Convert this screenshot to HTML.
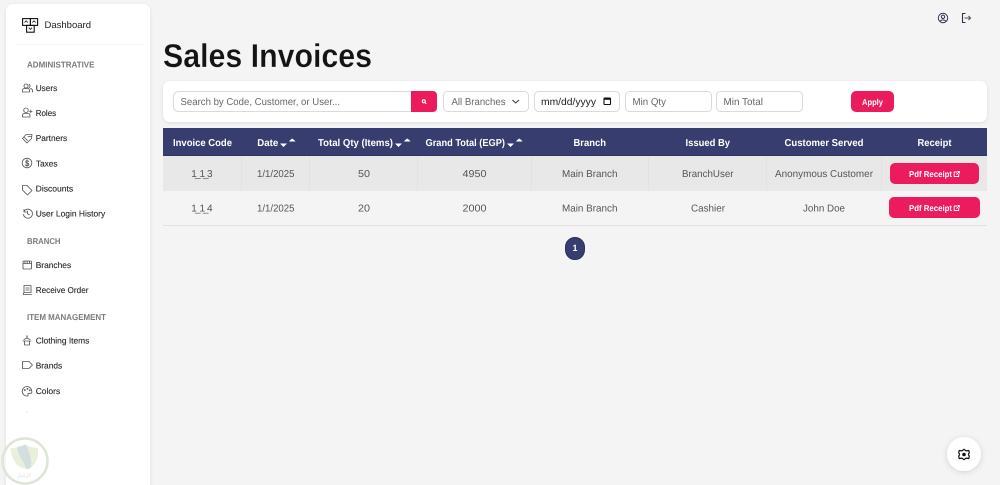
<!DOCTYPE html>
<html lang="en"><head><meta charset="utf-8"><title>Sales Invoices</title>
<style>
html,body{margin:0;padding:0;width:1000px;height:485px;overflow:hidden;background:#f4f4f4}
svg{display:block;position:absolute;left:0;top:0}
text{font-family:"Liberation Sans",sans-serif;text-rendering:geometricPrecision}
.nav{font-size:8.5px;fill:#2a2a2a;stroke:#2a2a2a;stroke-width:.12}
.sec{font-size:8.5px;fill:#7a7a7a;font-weight:bold}
.th{font-size:10px;fill:#fff;font-weight:bold}
.td{font-size:10px;fill:#555}
.ph{font-size:10px;fill:#666}
.ic{fill:none;stroke:#555;stroke-width:.85;stroke-linecap:round;stroke-linejoin:round}
</style></head><body>
<svg width="1000" height="485" viewBox="0 0 1000 485">
<defs>
<filter id="s" x="-10%" y="-10%" width="120%" height="120%"><feDropShadow dx="0" dy="1" stdDeviation="1.5" flood-color="#000" flood-opacity=".1"/></filter>
<filter id="g" x="-40%" y="-40%" width="180%" height="180%"><feDropShadow dx="0" dy="1" stdDeviation="3" flood-color="#000" flood-opacity=".14"/></filter>
</defs>

<!-- sidebar -->
<rect x="6" y="4" width="144" height="490" rx="7" fill="#fff" filter="url(#s)"/>
<rect x="14" y="44" width="130" height="1" fill="#f6f6f6"/>
<g fill="none" stroke="#111" stroke-width="1.1">
<rect x="22.6" y="18.6" width="7.8" height="6.8"/><rect x="30.4" y="18.6" width="7.2" height="6.8"/><rect x="26.6" y="25.4" width="7.6" height="6.8"/>
<path d="M24.5 22.5l1.7-1.7 1.7 1.7M32.3 22.5l1.7-1.7 1.7 1.7M28.7 27.7l1.7 1.7 1.7-1.7" stroke-width=".8"/>
</g>
<text x="44.5" y="28" font-size="9.5" fill="#222" textLength="46.5" lengthAdjust="spacingAndGlyphs">Dashboard</text>

<text class="sec" x="27" y="67.5" textLength="67.5" lengthAdjust="spacingAndGlyphs">ADMINISTRATIVE</text>
<text class="nav" x="35.7" y="91" textLength="21.5" lengthAdjust="spacingAndGlyphs">Users</text>
<text class="nav" x="35.7" y="116" textLength="20.5" lengthAdjust="spacingAndGlyphs">Roles</text>
<text class="nav" x="35.7" y="141" textLength="31.5" lengthAdjust="spacingAndGlyphs">Partners</text>
<text class="nav" x="36" y="166.5" textLength="21.5" lengthAdjust="spacingAndGlyphs">Taxes</text>
<text class="nav" x="35.7" y="191.5" textLength="37.5" lengthAdjust="spacingAndGlyphs">Discounts</text>
<text class="nav" x="35.7" y="216.5" textLength="69.5" lengthAdjust="spacingAndGlyphs">User Login History</text>
<text class="sec" x="27" y="244" textLength="33.5" lengthAdjust="spacingAndGlyphs">BRANCH</text>
<text class="nav" x="35.7" y="268" textLength="35.5" lengthAdjust="spacingAndGlyphs">Branches</text>
<text class="nav" x="35.7" y="293" textLength="52.8" lengthAdjust="spacingAndGlyphs">Receive Order</text>
<text class="sec" x="27" y="320" textLength="79" lengthAdjust="spacingAndGlyphs">ITEM MANAGEMENT</text>
<text class="nav" x="35.7" y="343.5" textLength="53.7" lengthAdjust="spacingAndGlyphs">Clothing Items</text>
<text class="nav" x="35.7" y="368.5" textLength="26.5" lengthAdjust="spacingAndGlyphs">Brands</text>
<text class="nav" x="35.7" y="394" textLength="24.5" lengthAdjust="spacingAndGlyphs">Colors</text>
<circle cx="27" cy="412" r=".6" fill="#ccc"/>

<!-- sidebar icons -->
<g class="ic">
<path d="M22.5 92v-1.5q0-2 2-2h3q2 0 2 2V92zM26 88a2 2 0 1 0 0-4 2 2 0 0 0 0 4M29 84.3a2 2 0 0 1 0 3.5M30.5 88.6q2 .3 2 2.2V92"/>
<path d="M22.5 117v-1.5q0-2 2-2h3.5q2 0 2 2v1.5zM26 112.5a2.2 2.2 0 1 0 0-4.500 2.200 2.200 0 0 0 0 4.500M29.5 111.5h2.6M30.8 110v2.8"/>
<path d="M22.5 138.500l3.500-4h6l-.5 4-4.500 4.500zM24.500 137.500l3 3M28 136.500h3"/>
<circle cx="27" cy="163" r="4.800"/><path d="M28.800 161.500q-1-1-2-.8-1.300.3-1 1.500.3.900 1.500 1 1.500.3 1.500 1.300 0 1.200-1.500 1.200-1.200 0-2-.8M27 159.500v7"/>
<path d="M22.500 185.500h4.500l5 5-4.500 4.500-5-5z"/>
<path d="M24 211.500a4.500 4.500 0 1 1-.5 3M24 209.500v2.500h2.500M27.500 211v2.800l1.800 1"/>
<rect x="23" y="261" width="8.500" height="8" rx="1"/><path d="M23 263.500h8.500M25 261v2.500M27.200 261v2.500M29.500 261v2.500"/>
<path d="M24 285.500h7v7h-7zM23.500 294.500h8M24 292.500q-1 1-.5 2M25.800 288h3.500M25.800 290h3.500"/>
<path d="M27 336v2M24 339.500l3-1.500 3 1.500M23 341h8M24.500 341v4h5v-4M26.500 336h1"/>
<path d="M22.500 361.500h6.500l3.500 3.500-3.500 3.500h-6.500z"/>
<path d="M27 386.500a4.800 4.800 0 1 0 0 9.600q1.400 0 1-1.300-.6-1.500 1-1.500h2q1 0 .8-2a4.800 4.800 0 0 0-4.800-4.800z"/>
<circle cx="24.800" cy="390" r=".5"/><circle cx="27.500" cy="388.800" r=".5"/><circle cx="29.800" cy="390.300" r=".5"/>
</g>

<!-- top right icons -->
<g fill="none" stroke="#2c3550" stroke-width="1">
<circle cx="943" cy="18" r="4.700"/><circle cx="943" cy="16.800" r="1.700"/><path d="M939.800 21.200q3.200-2.700 6.400 0"/>
<path d="M965.500 13.500h-3v9h3" stroke-width="1.100"/>
<path d="M964.500 18h6M968.500 16l2 2-2 2" stroke="#555" stroke-width="1.100"/>
</g>

<!-- title -->
<text x="163" y="67" font-size="33" font-weight="bold" fill="#141414" stroke="#f4f4f4" stroke-width=".25" textLength="209" lengthAdjust="spacingAndGlyphs">Sales Invoices</text>

<!-- filter card -->
<rect x="163" y="81" width="824" height="41" rx="7" fill="#fff" filter="url(#s)"/>
<rect x="173.500" y="91.500" width="250" height="20" rx="5" fill="#fff" stroke="#d8dadd"/>
<path d="M411 91h21.500q4.500 0 4.500 4.500v12q0 4.500-4.500 4.500H411z" fill="#ec1b5e"/>
<circle cx="423.800" cy="101.300" r="1.500" fill="none" stroke="#fff" stroke-width="1.100"/><path d="M425 102.500l1.300 1.300" stroke="#fff" stroke-width="1.100"/>
<text class="ph" x="180.500" y="105" textLength="159.500" lengthAdjust="spacingAndGlyphs">Search by Code, Customer, or User...</text>
<rect x="443.500" y="91.500" width="85" height="20" rx="4" fill="#fff" stroke="#d8dadd"/>
<text class="ph" x="451.500" y="105" textLength="54" lengthAdjust="spacingAndGlyphs">All Branches</text>
<path d="M512.500 100l3.200 3 3.200-3" fill="none" stroke="#333" stroke-width="1"/>
<rect x="534.500" y="91.500" width="85" height="20" rx="4" fill="#fff" stroke="#d8dadd"/>
<text x="541" y="105" font-size="10" fill="#222" textLength="55" lengthAdjust="spacingAndGlyphs">mm/dd/yyyy</text>
<rect x="604" y="98" width="6.500" height="6.500" rx=".8" fill="none" stroke="#111" stroke-width="1.100"/><rect x="604" y="98" width="6.500" height="1.800" fill="#111"/>
<rect x="625.500" y="91.500" width="86" height="20" rx="4" fill="#fff" stroke="#d8dadd"/>
<text class="ph" x="632.500" y="105" textLength="33.500" lengthAdjust="spacingAndGlyphs">Min Qty</text>
<rect x="716.500" y="91.500" width="86" height="20" rx="4" fill="#fff" stroke="#d8dadd"/>
<text class="ph" x="723.500" y="105" textLength="39.500" lengthAdjust="spacingAndGlyphs">Min Total</text>
<rect x="851" y="91" width="43" height="21" rx="5" fill="#ec1b5e"/>
<text x="862" y="105" font-size="8.500" font-weight="bold" fill="#fff" textLength="21" lengthAdjust="spacingAndGlyphs">Apply</text>

<!-- table -->
<rect x="163" y="128" width="824" height="28" fill="#373d6e"/>
<rect x="163" y="155" width="824" height="1" fill="#2e3360"/>
<rect x="163" y="156" width="824" height="35" fill="#e8e8e8"/>
<g fill="#e2e2e2"><rect x="241" y="156" width="1" height="35"/><rect x="309" y="156" width="1" height="35"/><rect x="417" y="156" width="1" height="35"/><rect x="531" y="156" width="1" height="35"/><rect x="648" y="156" width="1" height="35"/><rect x="766" y="156" width="1" height="35"/><rect x="881" y="156" width="1" height="35"/></g>
<rect x="163" y="225" width="824" height="1" fill="#e2e2e2"/>

<text class="th" x="173" y="146" textLength="59" lengthAdjust="spacingAndGlyphs">Invoice Code</text>
<text class="th" x="257.300" y="146" textLength="21" lengthAdjust="spacingAndGlyphs">Date</text>
<text class="th" x="318" y="146" textLength="75" lengthAdjust="spacingAndGlyphs">Total Qty (Items)</text>
<text class="th" x="425.500" y="146" textLength="79.500" lengthAdjust="spacingAndGlyphs">Grand Total (EGP)</text>
<text class="th" x="573.500" y="146" textLength="32.500" lengthAdjust="spacingAndGlyphs">Branch</text>
<text class="th" x="685.500" y="146" textLength="44.500" lengthAdjust="spacingAndGlyphs">Issued By</text>
<text class="th" x="784.500" y="146" textLength="79" lengthAdjust="spacingAndGlyphs">Customer Served</text>
<text class="th" x="917.500" y="146" textLength="34" lengthAdjust="spacingAndGlyphs">Receipt</text>
<g fill="#fff">
<path d="M280 143.500h7l-3.500 3.500zM289 141.500h6.500l-1.300-1.500-2-1.500-2 1.500zM395 143.500h7l-3.500 3.500zM404 141.500h6.500l-1.300-1.500-2-1.500-2 1.500zM507 143.500h7l-3.500 3.500zM516 141.500h6.500l-1.300-1.500-2-1.500-2 1.500z"/>
</g>

<g class="td">
<text x="191.300 195 199.500 203 207" y="177">1_1_3</text>
<text x="257" y="177" textLength="37.500" lengthAdjust="spacingAndGlyphs">1/1/2025</text>
<text x="358" y="177" textLength="12" lengthAdjust="spacingAndGlyphs">50</text>
<text x="462.500" y="177" textLength="24" lengthAdjust="spacingAndGlyphs">4950</text>
<text x="562" y="177" textLength="55.500" lengthAdjust="spacingAndGlyphs">Main Branch</text>
<text x="682" y="177" textLength="51.500" lengthAdjust="spacingAndGlyphs">BranchUser</text>
<text x="775" y="177" textLength="98" lengthAdjust="spacingAndGlyphs">Anonymous Customer</text>
<text x="191.300 195 199.500 203 207" y="211.500">1_1_4</text>
<text x="257" y="211.500" textLength="37.500" lengthAdjust="spacingAndGlyphs">1/1/2025</text>
<text x="358" y="211.500" textLength="12" lengthAdjust="spacingAndGlyphs">20</text>
<text x="462.500" y="211.500" textLength="24" lengthAdjust="spacingAndGlyphs">2000</text>
<text x="562" y="211.500" textLength="55.500" lengthAdjust="spacingAndGlyphs">Main Branch</text>
<text x="691" y="211.500" textLength="34" lengthAdjust="spacingAndGlyphs">Cashier</text>
<text x="803" y="211.500" textLength="42" lengthAdjust="spacingAndGlyphs">John Doe</text>
</g>

<rect x="890" y="163" width="89" height="21" rx="5" fill="#ec1b5e"/>
<rect x="889" y="197" width="91" height="21" rx="5" fill="#ec1b5e"/>
<text x="909" y="177" font-size="8.500" font-weight="bold" fill="#fff" textLength="43" lengthAdjust="spacingAndGlyphs">Pdf Receipt</text>
<text x="909" y="211" font-size="8.500" font-weight="bold" fill="#fff" textLength="43" lengthAdjust="spacingAndGlyphs">Pdf Receipt</text>
<g fill="none" stroke="#fff" stroke-width=".9">
<path d="M957 172h-2.800v4.500h4.500V174M956.500 174.500l3-3M957.500 171.500h2v2"/>
<path d="M957 206h-2.800v4.500h4.500V208M956.500 208.500l3-3M957.500 205.500h2v2"/>
</g>

<!-- pagination -->
<rect x="565.500" y="237.500" width="19" height="22" rx="9.500" fill="#373d6e" stroke="#2a2f5c"/>
<text x="575" y="251" font-size="9" font-weight="bold" fill="#fff" text-anchor="middle">1</text>

<!-- settings -->
<circle cx="964" cy="454" r="17" fill="#fff" filter="url(#g)"/>
<path d="M964 449.300l2.100 1.600 2.700-.4 0 0 .5 2.200-.9 1.800.9 1.800-.5 2.200-2.700-.4-2.100 1.600-2.100-1.600-2.700.4-.5-2.200.9-1.800-.9-1.800.5-2.200 2.700.4z" fill="none" stroke="#111" stroke-width="1.200" stroke-linejoin="round"/>
<circle cx="964" cy="454.500" r="1.800" fill="#111"/>

<!-- watermark -->
<g>
<circle cx="25" cy="461" r="22.500" fill="#fff" fill-opacity=".45" stroke="#dde6d6" stroke-width="2.500"/>
<path d="M10.500 448q7 .5 14.500-3.500 6 3.500 13 3.500.5 10-3 15.500-4 4.500-9.500 5.500-6-1.500-9.500-5.500-5-6-5.500-15.500z" fill="#e8f0dc"/>
<path d="M17 447q5-1 8-2.500l1 1q5 8 5.500 21.500-2 1.500-5 2.500-1-3-3-7-5-7-6.500-15.500z" fill="#d3dede"/>
<text x="24" y="477" font-size="5" fill="#d8ded4" text-anchor="middle">كارامل</text>
</g>
</svg>
</body></html>
